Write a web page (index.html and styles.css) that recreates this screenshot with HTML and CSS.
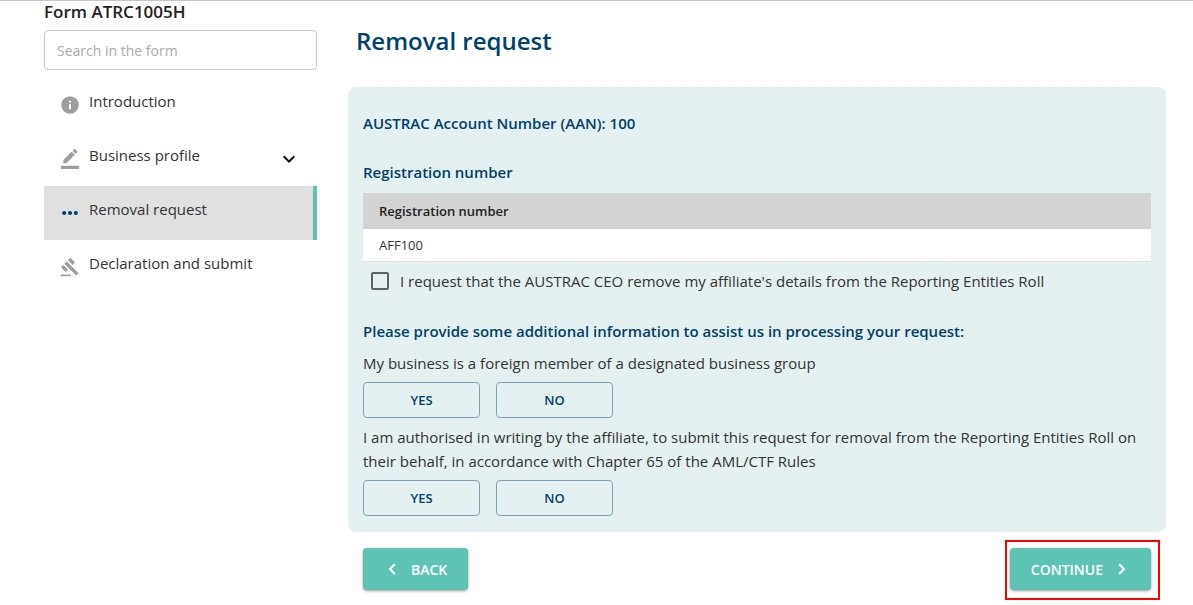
FILE: index.html
```html
<!DOCTYPE html>
<html lang="en">

<head>
    <meta charset="UTF-8">
    <meta name="viewport" content="width=device-width, initial-scale=1.0">
    <title>Removal request</title>

    <link rel="stylesheet" href="styles.css">
</head>

<body>
    <div class="page">

        <aside class="sidebar">
            <h2 class="form-title">Form ATRC1005H</h2>
            <input type="search" class="search" placeholder="Search in the form" aria-label="Search in the form">

            <nav class="menu">
                <a href="#introduction" class="menu-item">
                    <svg class="icon" viewBox="0 0 24 24"><path d="M12 1.500a10.500 10.500 0 1 0 0 21 10.500 10.500 0 0 0 0-21zm1.200 15.500h-2.400v-6h2.400zm0-8h-2.400V6.800h2.400z"/></svg>
                    <span class="menu-text">Introduction</span>
                </a>
                <a href="#business" class="menu-item">
                    <svg class="icon" viewBox="0 0 24 24"><path d="M17.75 7 14 3.25l-10 10V17h3.75zm2.96-2.96a1 1 0 0 0 0-1.41L18.37.29a1 1 0 0 0-1.41 0L15 2.25 18.75 6zM1 20h22v4H1z"/></svg>
                    <span class="menu-text">Business profile</span>
                    <svg class="icon arrow" viewBox="0 0 24 24"><path d="M7.41 8.59 12 13.17l4.59-4.58L18 10l-6 6-6-6z"/></svg>
                </a>
                <a href="#removal" class="menu-item active">
                    <svg class="icon" viewBox="0 0 24 24"><circle cx="5" cy="12" r="2.500"/><circle cx="12" cy="12" r="2.500"/><circle cx="19" cy="12" r="2.500"/></svg>
                    <span class="menu-text">Removal request</span>
                </a>
                <a href="#declaration" class="menu-item">
                    <svg class="icon" viewBox="0 0 24 24"><path d="M1 21h12v2H1zM5.24 8.07l2.83-2.83 14.14 14.14-2.83 2.83zM12.32 1l5.66 5.66-2.83 2.83-5.66-5.66zM3.83 9.48l5.66 5.66-2.83 2.83L1 12.31z"/></svg>
                    <span class="menu-text">Declaration and submit</span>
                </a>
            </nav>
        </aside>

        <main class="content">
            <h1 class="heading">Removal request</h1>

            <form id="removal-form" class="card">
                <h3 class="subheading">AUSTRAC Account Number (AAN): 100</h3>
                <h3 class="subheading">Registration number</h3>

                <table class="numbers">
                    <thead>
                        <tr>
                            <th>Registration number</th>
                        </tr>
                    </thead>
                    <tbody>
                        <tr>
                            <td>AFF100</td>
                        </tr>
                    </tbody>
                </table>

                <label class="check">
                    <input type="checkbox">
                    I request that the AUSTRAC CEO remove my affiliate's details from the Reporting Entities Roll
                </label>

                <h3 class="subheading">Please provide some additional information to assist us in processing your request:</h3>

                <p class="question" id="q1">My business is a foreign member of a designated business group</p>
                <div class="answers" role="group" aria-labelledby="q1">
                    <button type="button" class="choice">YES</button>
                    <button type="button" class="choice">NO</button>
                </div>

                <p class="question" id="q2">I am authorised in writing by the affiliate, to submit this request for removal from the Reporting Entities Roll on their behalf, in accordance with Chapter 65 of the AML/CTF Rules</p>
                <div class="answers" role="group" aria-labelledby="q2">
                    <button type="button" class="choice">YES</button>
                    <button type="button" class="choice">NO</button>
                </div>
            </form>

            <div class="footer">
                <button type="button" class="btn">
                    <svg class="chevron" viewBox="0 0 24 24"><path d="M15.41 6.400 13.500 4.500l-7.500 7.500 7.500 7.500 1.910-1.900L9.820 12z"/></svg>
                    BACK
                </button>
                <button type="submit" form="removal-form" class="btn marked">
                    CONTINUE
                    <svg class="chevron" viewBox="0 0 24 24"><path d="M10.500 4.500 8.590 6.400 14.180 12l-5.590 5.600 1.910 1.900L18 12z"/></svg>
                </button>
            </div>
        </main>

    </div>
</body>

</html>
```
FILE: styles.css
```css
* {
    box-sizing: border-box;
}

body {
    margin: 0;
    border-top: 1px solid #c6c6c6;
    font-family: "Open Sans", "Noto Sans", sans-serif;
    font-size: 15px;
    line-height: 24px;
    color: #333;
    background-color: #fff;
}

h1, h2, h3, p {
    margin: 0;
}

button, input {
    font-family: inherit;
}

.page {
    display: flex;
    gap: 31px;
    padding: 0 27px 0 44px;
}

/* left column */
.sidebar {
    flex: 0 0 273px;
}

.form-title {
    font-size: 17px;
    line-height: 21px;
    font-weight: 600;
    color: #222;
    margin-bottom: 8px;
}

.search {
    display: block;
    width: 100%;
    height: 40px;
    padding: 0 12px;
    border: 1px solid #c8c8c8;
    border-radius: 4px;
    font-size: 14px;
    background-color: #fff;
}

.search::placeholder {
    color: #aaa;
}

.menu {
    padding-top: 8px;
}

.menu-item {
    display: flex;
    align-items: center;
    gap: 9px;
    height: 54px;
    padding: 0 16px;
    color: #333;
    text-decoration: none;
}

.menu-item.active {
    background-color: #e0e0e0;
    border-right: 4px solid #5dc3b3;
}

.menu-text {
    flex: 1;
    padding-bottom: 8px;
}

.icon {
    width: 20px;
    height: 20px;
    fill: #9e9e9e;
}

.active .icon {
    fill: #00416b;
}

.icon.arrow {
    width: 24px;
    height: 24px;
    fill: #111;
}

/* right column */
.content {
    flex: 1;
}

.heading {
    padding: 24px 8px 30px;
    font-size: 24px;
    line-height: 32px;
    font-weight: 600;
    color: #00416b;
}

.card {
    padding: 24px 15px 16px;
    border-radius: 8px;
    background-color: #e5f1f1;
}

.subheading {
    margin-bottom: 25px;
    font-size: 15px;
    line-height: 24px;
    font-weight: 600;
    color: #00416b;
}

.subheading + .numbers {
    margin-top: -16px;
}

.numbers {
    width: 100%;
    border-collapse: collapse;
    font-size: 13px;
    line-height: 20px;
    background-color: #fff;
}

.numbers th {
    padding: 8px 16px;
    text-align: left;
    font-weight: 600;
    color: #222;
    background-color: #d3d3d3;
}

.numbers td {
    padding: 6px 16px;
    border-bottom: 1px solid #e0e0e0;
}

.check {
    display: flex;
    align-items: center;
    gap: 11px;
    padding: 7px 8px;
    margin-bottom: 19px;
}

.check input {
    appearance: none;
    width: 18px;
    height: 18px;
    margin: 0;
    border: 2px solid #616161;
    border-radius: 2px;
}

.check input:checked {
    background-color: #00416b;
}

.check + .subheading {
    margin-bottom: 8px;
}

.answers {
    display: flex;
    gap: 16px;
    padding: 7px 0;
}

.answers:last-child {
    padding-bottom: 0;
}

.choice {
    width: 117px;
    height: 36px;
    border: 1px solid #80a0b5;
    border-radius: 4px;
    font-size: 13px;
    font-weight: 600;
    color: #00416b;
    background-color: transparent;
}

.footer {
    display: flex;
    justify-content: space-between;
    padding: 16px 15px;
}

.btn {
    position: relative;
    display: flex;
    align-items: center;
    gap: 9px;
    height: 42px;
    padding: 0 21px;
    border: none;
    border-radius: 4px;
    font-size: 14px;
    font-weight: 600;
    color: #fff;
    background-color: #5dc3b3;
    box-shadow: 0 1px 3px rgba(0, 0, 0, 0.4);
}

/* red frame around the continue button */
.marked::after {
    content: "";
    position: absolute;
    inset: -8px -9px -10px -5px;
    border: 2px solid #f00;
}

.chevron {
    width: 18px;
    height: 18px;
    fill: #fff;
}
```
